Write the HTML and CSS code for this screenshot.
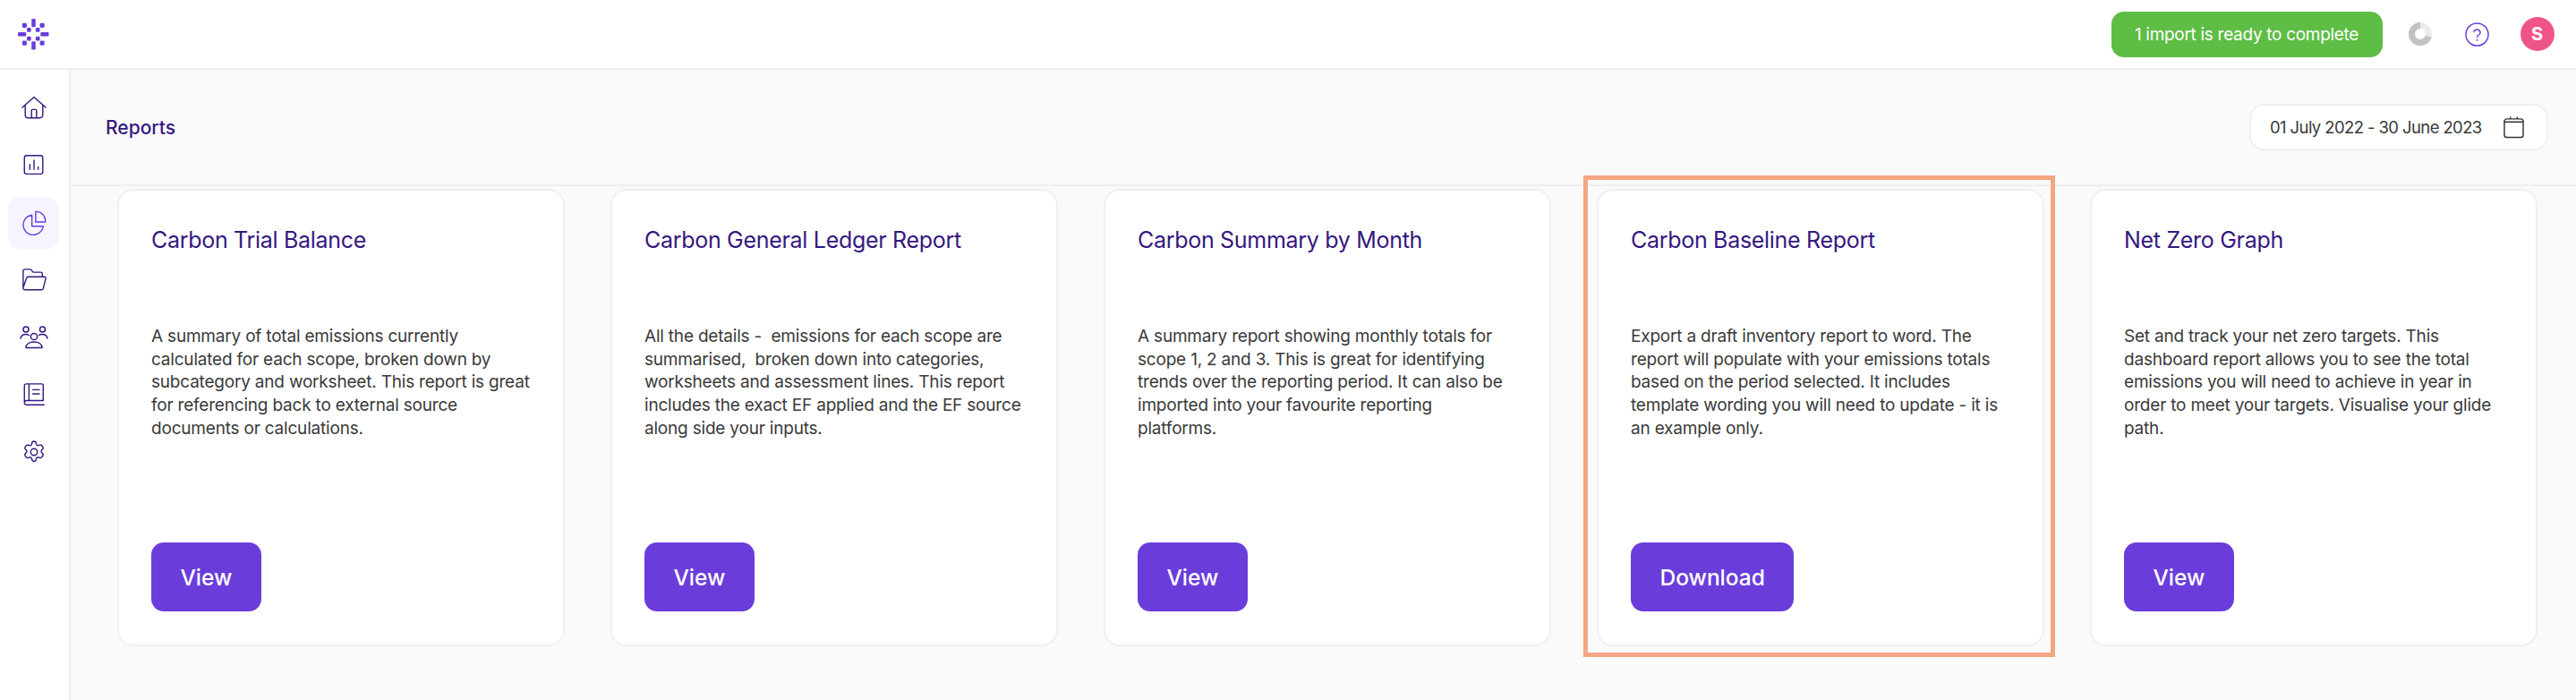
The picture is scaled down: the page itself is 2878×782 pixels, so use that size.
FILE: index.html
```html
<!DOCTYPE html>
<html lang="en">
<head>
<meta charset="utf-8">
<title>Reports</title>
<link rel="stylesheet" href="styles.css">
</head>
<body>
<div class="app">
  <header class="topbar">
    <svg class="logo" viewBox="0 0 36 36" aria-label="logo">
      <g fill="#6a3ddb">
        <rect x="15.7" y="0" width="4.6" height="9.5" rx="1.2"/>
        <rect x="15.7" y="26" width="4.6" height="9.5" rx="1.2"/>
        <rect x="0" y="15.5" width="9.5" height="4.6" rx="1.2"/>
        <rect x="26" y="15.5" width="9.5" height="4.6" rx="1.2"/>
        <rect x="5" y="5" width="5.2" height="5.2" rx="1.4"/>
        <rect x="25.3" y="5" width="5.2" height="5.2" rx="1.4"/>
        <rect x="5" y="25.3" width="5.2" height="5.2" rx="1.4"/>
        <rect x="25.3" y="25.3" width="5.2" height="5.2" rx="1.4"/>
        <rect x="10.3" y="10.3" width="4.8" height="4.8" rx="1.2"/>
        <rect x="20.4" y="10.3" width="4.8" height="4.8" rx="1.2"/>
        <rect x="10.3" y="20.4" width="4.8" height="4.8" rx="1.2"/>
        <rect x="20.4" y="20.4" width="4.8" height="4.8" rx="1.2"/>
      </g>
    </svg>
    <div class="top-actions">
      <button class="import-btn">1 import is ready to complete</button>
      <svg class="spinner" viewBox="0 0 28 28">
        <circle cx="14" cy="14" r="9.500" fill="none" stroke="#ececec" stroke-width="7"/>
        <path d="M14 4.500A9.500 9.500 0 1 0 23.200 16.500" fill="none" stroke="#c2c2c2" stroke-width="7"/>
      </svg>
      <svg class="help" viewBox="0 0 28 28">
        <circle cx="14" cy="14" r="13" fill="none" stroke="#6a3ddb" stroke-width="1.5"/>
        <path d="M10.3 11a3.8 3.8 0 0 1 7.4 .8c0 2.5-3.6 3-3.6 5.4" fill="none" stroke="#6a3ddb" stroke-width="1.5" stroke-linecap="round"/>
        <circle cx="14.1" cy="20.5" r="1" fill="#6a3ddb"/>
      </svg>
      <div class="avatar">S</div>
    </div>
  </header>
  <div class="body">
    <nav class="sidebar">
      <a class="nav-item">
        <svg viewBox="0 0 30 30" class="nav-icon">
          <path d="M1 14 15 1.5 29 14M4.5 11.500V23a3.500 3.500 0 0 0 3.500 3.500h14a3.500 3.500 0 0 0 3.500-3.500V11.500M12 26.500V17.500a1 1 0 0 1 1-1h4a1 1 0 0 1 1 1v9"/>
        </svg>
      </a>
      <a class="nav-item">
        <svg viewBox="0 0 30 30" class="nav-icon">
          <rect x="3.500" y="3" width="22" height="22" rx="2.500"/>
          <path d="M10 19.500v-6M15 19.500V8.500M20 19.500v-3"/>
        </svg>
      </a>
      <a class="nav-item active">
        <svg viewBox="0 0 30 30" class="nav-icon">
          <path d="M12.500 5.500A12 12 0 1 0 26 19H12.500Z"/>
          <path d="M17 1.500A11 11 0 0 1 28.500 14H17Z"/>
        </svg>
      </a>
      <a class="nav-item">
        <svg viewBox="0 0 30 30" class="nav-icon">
          <path d="M2 24V4a2 2 0 0 1 2-2h7l3 3.500h9a2 2 0 0 1 2 2v3M2 24a2.500 2.500 0 0 0 2.500 2.500H24a2 2 0 0 0 2-1.500l3-12a1.500 1.500 0 0 0-1.500-2H8a2 2 0 0 0-2 1.500Z"/>
        </svg>
      </a>
      <a class="nav-item">
        <svg viewBox="0 0 32 28" class="nav-icon wide">
          <circle cx="7" cy="5" r="3"/><circle cx="25.500" cy="5" r="3"/><circle cx="16" cy="13" r="3.600"/>
          <path d="M1 15c.5-3 2.500-4.500 6-4.500 1.500 0 2.500.3 3.500 1M31 15c-.5-3-2.500-4.500-6-4.500-1.500 0-2.500.3-3.500 1M7 25.500c0-4 3.500-6.500 9-6.500s9 2.500 9 6.500Z"/>
        </svg>
      </a>
      <a class="nav-item">
        <svg viewBox="0 0 30 30" class="nav-icon">
          <path d="M3.500 24.500V4a2 2 0 0 1 2-2h19a1.500 1.500 0 0 1 1.500 1.500V22H6a2.500 2.500 0 0 0-2.500 2.500 2.500 2.500 0 0 0 2.500 2.500h21M9 2v20M13.500 9h8M13.500 14h8"/>
        </svg>
      </a>
      <a class="nav-item">
        <svg viewBox="0 0 30 30" class="nav-icon">
          <circle cx="15" cy="15" r="4"/>
          <path d="M12.500 2.500a2.500 2.500 0 0 1 5 0c0 2 2.200 3 3.700 2.100a2.500 2.500 0 0 1 3.500 1c1.300 1.600 1.800 3.100 .2 4.200-1.700 1.100-1.700 3.300 0 4.400 1.600 1.100 1.100 2.600-.2 4.200a2.500 2.500 0 0 1-3.500 1c-1.500-.9-3.700.1-3.700 2.100a2.500 2.500 0 0 1-5 0c0-2-2.200-3-3.700-2.100a2.500 2.500 0 0 1-3.500-1c-1.300-1.600-1.800-3.100-.2-4.200 1.700-1.100 1.700-3.300 0-4.400-1.600-1.100-1.100-2.600.2-4.200a2.500 2.500 0 0 1 3.500-1c1.500.9 3.700-.1 3.700-2.100Z" transform="translate(0 2.200)"/>
        </svg>
      </a>
    </nav>
    <main class="main">
      <div class="subheader">
        <h1 class="page-title">Reports</h1>
        <div class="date-picker">
          <span>01 July 2022 - 30 June 2023</span>
          <svg class="cal" viewBox="0 0 24 26">
            <rect x="1" y="3.500" width="22" height="21.500" rx="3"/>
            <path d="M1 7h22M8 1v2.500M16 1v2.500"/>
          </svg>
        </div>
      </div>
      <section class="cards">
        <article class="card">
          <h2 class="card-title">Carbon Trial Balance</h2>
          <p class="card-text">A summary of total emissions currently calculated for each scope, broken down by subcategory and worksheet. This report is great for referencing back to external source documents or calculations.</p>
          <button class="btn">View</button>
        </article>
        <article class="card">
          <h2 class="card-title">Carbon General Ledger Report</h2>
          <p class="card-text">All the details -&nbsp; emissions for each scope are summarised,&nbsp; broken down into categories, worksheets and assessment lines. This report includes the exact EF applied and the EF source along side your inputs.</p>
          <button class="btn">View</button>
        </article>
        <article class="card">
          <h2 class="card-title">Carbon Summary by Month</h2>
          <p class="card-text">A summary report showing monthly totals for scope 1, 2 and 3. This is great for identifying trends over the reporting period. It can also be imported into your favourite reporting<br>platforms.</p>
          <button class="btn">View</button>
        </article>
        <article class="card highlighted">
          <h2 class="card-title">Carbon Baseline Report</h2>
          <p class="card-text">Export a draft inventory report to word. The report will populate with your emissions totals based on the period selected. It includes template wording you will need to update - it is an example only.</p>
          <button class="btn">Download</button>
        </article>
        <article class="card">
          <h2 class="card-title">Net Zero Graph</h2>
          <p class="card-text">Set and track your net zero targets. This dashboard report allows you to see the total emissions you will need to achieve in year in order to meet your targets. Visualise your glide path.</p>
          <button class="btn">View</button>
        </article>
      </section>
    </main>
  </div>
</div>
</body>
</html>
```
FILE: styles.css
```css
* { box-sizing: border-box; }
html, body { margin: 0; height: 100%; }
body {
  font-family: "Inter", "Liberation Sans", sans-serif;
  background: #fafafa;
  color: #3a3a3a;
  overflow: hidden;
}
.app { display: flex; flex-direction: column; height: 782px; }
.topbar {
  height: 78px;
  flex: none;
  background: #fff;
  border-bottom: 2px solid #eeeeee;
  display: flex;
  align-items: center;
  justify-content: space-between;
  padding: 0 24.5px 0 20px;
}
.logo { width: 35px; height: 35px; display: block; }
.top-actions { display: flex; align-items: center; }
.import-btn {
  width: 303px;
  height: 51px;
  border: 0;
  border-radius: 14px;
  background: #5ebd45;
  color: #fff;
  font: 400 19px "Inter", sans-serif;
  letter-spacing: -0.3px;
  padding: 0;
}
.spinner { width: 28px; height: 28px; margin-left: 28px; }
.help { width: 27px; height: 27px; margin-left: 36px; }
.avatar {
  width: 38px;
  height: 38px;
  margin-left: 35px;
  border-radius: 50%;
  background: #ee5586;
  color: #fff;
  font-size: 20px;
  font-weight: 700;
  display: flex;
  align-items: center;
  justify-content: center;
}
.body { flex: 1; display: flex; min-height: 0; }
.sidebar {
  width: 79px;
  flex: none;
  background: #fff;
  border-right: 2px solid #eeeeee;
  padding: 14px 0 0 9px;
  display: flex;
  flex-direction: column;
  gap: 6px;
}
.nav-item {
  width: 57px;
  height: 58px;
  border-radius: 14px;
  display: flex;
  align-items: center;
  justify-content: center;
  color: #35177f;
}
.nav-item.active { background: #f6f4fe; color: #6a3ddb; }
.nav-icon {
  width: 28px;
  height: 28px;
  fill: none;
  stroke: currentColor;
  stroke-width: 1.500;
  stroke-linecap: round;
  stroke-linejoin: round;
}
.nav-icon.wide { width: 32px; }
.main { flex: 1; min-width: 0; display: flex; flex-direction: column; }
.subheader {
  height: 130px;
  flex: none;
  border-bottom: 2px solid #eeeeee;
  display: flex;
  align-items: center;
  justify-content: space-between;
  padding: 0 31px 0 39px;
}
.page-title {
  margin: 0;
  font-size: 21px;
  font-weight: 500;
  color: #35177f;
}
.date-picker {
  width: 334px;
  height: 52px;
  background: #fff;
  border: 2px solid #f0f0f0;
  border-radius: 16px;
  display: flex;
  align-items: center;
  justify-content: space-between;
  padding: 0 25px 0 21px;
  font-size: 18.5px;
  letter-spacing: -0.6px;
  color: #3a3a3a;
}
.cal {
  width: 23px;
  height: 26px;
  fill: none;
  stroke: #333;
  stroke-width: 1.500;
}
.cards {
  display: grid;
  grid-template-columns: repeat(5, 1fr);
  column-gap: 51px;
  padding: 3px 43px 0 52px;
}
.card {
  height: 511px;
  background: #fff;
  border: 2px solid #f0f0f0;
  border-radius: 18px;
  padding: 38px 36px 37px;
  display: flex;
  flex-direction: column;
  align-items: flex-start;
  position: relative;
}
.highlighted::after {
  content: "";
  position: absolute;
  top: -17px;
  right: -14px;
  bottom: -14px;
  left: -17px;
  border: 5px solid #f4a683;
  pointer-events: none;
}
.card-title {
  margin: 0;
  font-size: 25px;
  line-height: 34px;
  letter-spacing: -0.3px;
  font-weight: 400;
  color: #35177f;
}
.card-text {
  margin: 78px 0 0;
  font-size: 19px;
  line-height: 25.700px;
  letter-spacing: -0.2px;
  color: #3a3a3a;
}
.btn {
  margin-top: auto;
  height: 77px;
  padding: 0 32.5px;
  border: 0;
  border-radius: 14px;
  background: #6a3ddb;
  color: #fff;
  font: 500 24.5px "Inter", sans-serif;
}
```
